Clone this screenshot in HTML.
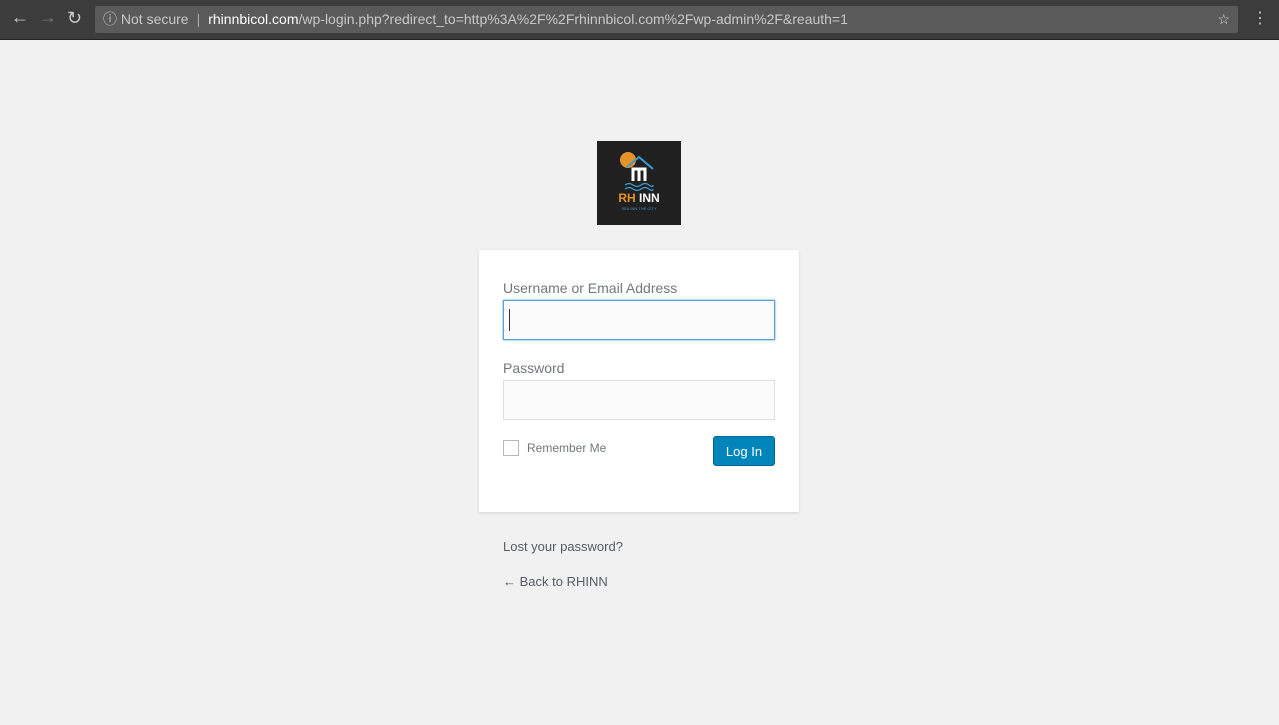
<!DOCTYPE html>
<html><head><style>
body{margin:0;width:1279px;height:725px;background:#f1f1f1;font-family:"Liberation Sans",sans-serif;position:relative;overflow:hidden}
.bar{position:absolute;left:0;top:0;width:1279px;height:39px;background:#3c3c3c;border-bottom:1px solid #222}
.url{position:absolute;left:95px;top:6px;width:1143px;height:27px;background:#5a5a5a;border-radius:2px;color:#c8c8c8;font-size:14px;line-height:27px}
.a{position:absolute;color:#ccc;font-size:18px;top:8px}
.box{position:absolute;left:479px;top:250px;width:320px;height:262px;background:#fff;box-shadow:0 1px 3px rgba(0,0,0,.13)}
.lbl{position:absolute;left:24px;font-size:14px;color:#72777c}
.inp{position:absolute;left:24px;width:272px;height:40px;background:#fbfbfb;border:1px solid #ddd;box-sizing:border-box}
a{color:#555d66;font-size:13px;text-decoration:none;position:absolute;left:503px}
</style></head><body>
<div class="bar">
<div class="a" style="left:11px;top:7px">&#8592;</div>
<div class="a" style="left:39px;top:7px;color:#777">&#8594;</div>
<div class="a" style="left:67px;top:8px">&#8635;</div>
<div class="url"><span style="margin-left:8px">&#9432; Not secure</span><span style="margin:0 8px;color:#aaa">|</span><span style="color:#fff">rhinnbicol.com</span>/wp-login.php?redirect_to=http%3A%2F%2Frhinnbicol.com%2Fwp-admin%2F&amp;reauth=1<span style="position:absolute;right:8px;color:#ddd">&#9734;</span></div>
<div class="a" style="left:1252px;font-size:16px">&#8942;</div>
</div>
<div style="position:absolute;left:597px;top:141px;width:84px;height:84px;background:#202020">
<div style="position:absolute;left:23px;top:11px;width:16px;height:16px;border-radius:50%;background:#e8922a"></div>
<svg width="84" height="84" style="position:absolute;left:0;top:0"><path d="M30 26 L42 16 L56 28" stroke="#3a9bd0" stroke-width="2" fill="none"/><path d="M36 40 V28 H48 V40 M42 28 V40" stroke="#fff" stroke-width="3" fill="none"/><path d="M28 44 q4 -3 8 0 t8 0 t8 0 t4 0 M28 48 q4 -3 8 0 t8 0 t8 0 t4 0" stroke="#3a9bd0" stroke-width="1.2" fill="none"/></svg>
<div style="position:absolute;left:0;width:84px;top:50px;text-align:center;font-weight:bold;font-size:12px;color:#e8922a">RH <span style="color:#fff">INN</span></div>
<div style="position:absolute;left:0;width:84px;top:65px;text-align:center;font-size:4px;color:#3a9bd0">SEA INN THE CITY</div>
</div>
<div class="box">
<div class="lbl" style="top:30px">Username or Email Address</div>
<div class="inp" style="top:50px;border-color:#5b9dd9;box-shadow:0 0 2px rgba(30,140,190,.8)"><div style="position:absolute;left:5px;top:8px;width:1px;height:22px;background:#333"></div></div>
<div class="lbl" style="top:110px">Password</div>
<div class="inp" style="top:130px"></div>
<div style="position:absolute;left:24px;top:190px;width:16px;height:16px;border:1px solid #b4b9be;box-sizing:border-box"></div>
<div style="position:absolute;left:48px;top:191px;font-size:12px;color:#72777c">Remember Me</div>
<div style="position:absolute;left:234px;top:186px;width:62px;height:30px;background:#0085ba;border:1px solid #006799;border-radius:3px;box-sizing:border-box;color:#fff;font-size:13px;text-align:center;line-height:29px">Log In</div>
</div>
<a style="top:539px">Lost your password?</a>
<a style="top:574px">&#8592; Back to RHINN</a>
</body></html>
